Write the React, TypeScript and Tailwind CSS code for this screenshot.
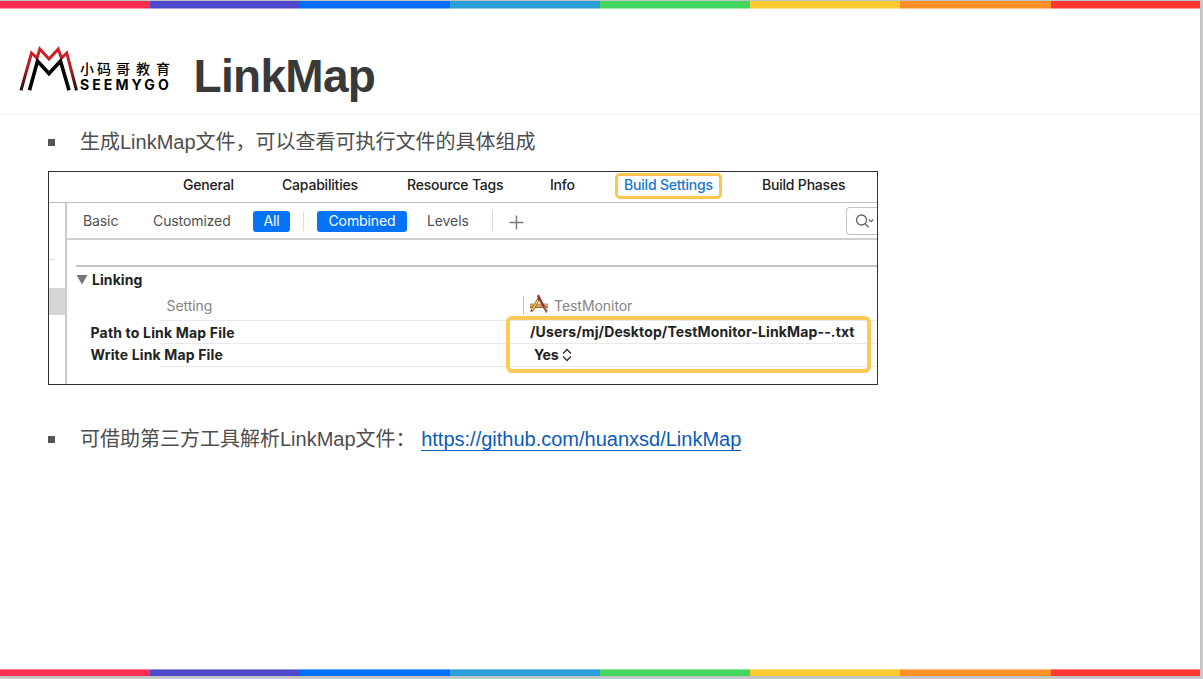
import React from "react";

function Stripe() {
  return (
    <div className="flex h-full w-full">
      <div className="w-[150px] bg-[#ff2d51]" />
      <div className="w-[150px] bg-[#4f4acb]" />
      <div className="w-[150px] bg-[#0070ff]" />
      <div className="w-[150px] bg-[#2b9fd9]" />
      <div className="w-[150px] bg-[#43d65e]" />
      <div className="w-[150px] bg-[#ffcb2e]" />
      <div className="w-[151px] bg-[#ff9027]" />
      <div className="w-[149px] bg-[#ff3731]" />
    </div>
  );
}

function Logo() {
  return (
    <div className="flex h-[50px] w-[154px] shrink-0">
      <svg className="shrink-0" width="62" height="50" viewBox="0 0 62 50" fill="none">
        <defs>
          <linearGradient id="peak" x1="0" y1="3" x2="0" y2="45" gradientUnits="userSpaceOnUse">
            <stop offset="0" stopColor="#d3222a" />
            <stop offset="0.45" stopColor="#b51f25" />
            <stop offset="1" stopColor="#2a0709" />
          </linearGradient>
        </defs>
        <path d="M3 45.300 L13.500 8 L19 13 L21.800 4 L31 14 L40.200 4 L43.500 13 L48.800 8 L58.500 45.300" stroke="url(#peak)" strokeWidth="3" />
        <path d="M11.500 45.300 L19.500 16 L31 28.500 L42.500 16 L51 45.300" stroke="#050505" strokeWidth="3.600" />
      </svg>
      <div className="flex w-[92px] flex-col pt-[15px] text-black">
        <div className="flex h-4 items-center font-['Noto_Sans_CJK_SC',sans-serif] text-[14px] leading-4 font-medium">
          <span className="w-[17px]">小</span>
          <span className="w-[19px]">码</span>
          <span className="w-5">哥</span>
          <span className="w-5">教</span>
          <span>育</span>
        </div>
        <div className="mt-px font-['Inter',sans-serif] text-[14px] leading-4 font-bold tracking-[3.100px]">SEEMYGO</div>
      </div>
    </div>
  );
}

function AppIcon() {
  return (
    <svg className="shrink-0" width="20" height="20" viewBox="0 0 20 20" fill="none">
      <path d="M1 9.500h18v4H1z" fill="#d99a6a" />
      <path d="M1 13.500h18" stroke="#a8663f" strokeWidth="1" />
      <path d="M9 2 L17.500 17.500" stroke="#8c3029" strokeWidth="2.400" />
      <path d="M15 13 L17.800 18.500" stroke="#8a7772" strokeWidth="2" />
      <path d="M9.500 5 L2.800 17" stroke="#6a4a20" strokeWidth="2.600" />
      <path d="M9 6 L3 16.500" stroke="#f0cf3c" strokeWidth="1.600" />
      <path d="M9 1 L11 5" stroke="#b62f2b" strokeWidth="2" />
      <path d="M1.300 18.500 L2 15.500 L4 16.500z" fill="#5b4b43" />
    </svg>
  );
}

function Tabs() {
  return (
    <div className="flex h-[31px] border-b border-[#bdbdbd] pb-[5px] pl-[134px] text-[14px] leading-[25px] font-medium tracking-[-0.2px] whitespace-nowrap text-[#202020]">
      <span className="w-[99px]">General</span>
      <span className="w-[125px]">Capabilities</span>
      <span className="w-[143px]">Resource Tags</span>
      <span className="w-[65px]">Info</span>
      <span className="mt-px flex h-[26px] w-[107px] shrink-0 items-center justify-center rounded-[5px] border-[3px] border-[#ffc64f] pb-[3px] text-[#1577d3]">
        Build Settings
      </span>
      <span className="ml-[40px]">Build Phases</span>
    </div>
  );
}

function Toolbar() {
  return (
    <div className="flex h-[37px] shrink-0 items-start border-b-2 border-[#cfcfcf] pt-2 pl-4 text-[14px] leading-[20px] tracking-[-0.1px] whitespace-nowrap text-[#505050]">
      <span className="w-[70px]">Basic</span>
      <span className="w-[100px]">Customized</span>
      <span className="h-[21px] w-[37px] rounded-[3px] bg-[#0573f8] text-center text-white">All</span>
      <span className="ml-[13px] h-5 w-px bg-[#dddddd]" />
      <span className="ml-[13px] h-[21px] w-[90px] rounded-[3px] bg-[#0573f8] text-center text-white">Combined</span>
      <span className="ml-5 w-[65px]">Levels</span>
      <span className="h-5 w-px bg-[#d8d8d8]" />
      <svg className="mt-1 ml-4" width="15" height="15" viewBox="0 0 15 15" stroke="#777777" strokeWidth="1.400">
        <path d="M7.500 .5v14M.5 7.500h14" />
      </svg>
      <span className="mt-[-4px] ml-auto flex h-[28px] w-[31px] items-center rounded-l-[4px] border-[1.500px] border-r-0 border-[#c2c2c2] pl-2">
        <svg width="22" height="18" viewBox="0 0 22 18" fill="none" stroke="#666666" strokeWidth="1.300">
          <circle cx="6.500" cy="8" r="5" />
          <path d="M10.200 11.700l3.300 3.500M13.800 7.500l2.300 2.200 2.300-2.200" />
        </svg>
      </span>
    </div>
  );
}

function BuildSettings() {
  return (
    <div className="relative ml-12 h-[214px] w-[830px] overflow-hidden border border-[#303030] bg-white font-['Inter',sans-serif]">
      <Tabs />
      <div className="flex h-[181px]">
        <div className="flex w-[18px] shrink-0 flex-col border-r-2 border-[#cacaca]">
          <div className="mt-[56px] h-px w-[6px] bg-[#dddddd]" />
          <div className="mt-[28px] h-[27px] w-full bg-[#d5d5d5]" />
        </div>
        <div className="flex min-w-0 flex-1 flex-col">
          <Toolbar />
          <div className="mt-[25px] ml-[9px] h-[2px] shrink-0 bg-[#c4c4c4]" />
          <div className="flex h-[26px] shrink-0 items-center pl-[9px] text-[14px] font-bold text-[#222222]">
            <svg width="12" height="10" viewBox="0 0 12 10">
              <path d="M.5 0h11L6 9.500z" fill="#777777" />
            </svg>
            <span className="ml-[4px] pb-px tracking-[0.080px]">Linking</span>
          </div>
          <div className="flex h-[27px] shrink-0 items-start pl-[99.500px] text-[14px] leading-[25px] tracking-[-0.050px] text-[#858585]">
            <span className="w-[356.500px]">Setting</span>
            <span className="mt-[3px] h-[18px] w-px bg-[#bdbdbd]" />
            <span className="mt-px ml-[5px] flex"><AppIcon /></span>
            <span className="ml-[5px]">TestMonitor</span>
          </div>
          <div className="ml-[93px] h-px shrink-0 bg-[#e9e9e9]" />
          <div className="flex h-[22px] shrink-0 items-center pl-[23.500px] text-[14px] font-bold tracking-[0.180px] whitespace-nowrap text-[#222222]">
            <span className="w-[439.500px]">Path to Link Map File</span>
            <span className="pb-[2px] tracking-[0.130px]">/Users/mj/Desktop/TestMonitor-LinkMap--.txt</span>
          </div>
          <div className="ml-[93px] h-px shrink-0 bg-[#e9e9e9]" />
          <div className="flex h-[22px] shrink-0 items-center pb-px pl-[23.500px] text-[14px] font-bold tracking-[0.150px] whitespace-nowrap text-[#222222]">
            <span className="w-[443.500px]">Write Link Map File</span>
            <span className="w-[28px] tracking-[-0.1px]">Yes</span>
            <svg className="mt-px" width="10" height="14" viewBox="0 0 10 14" fill="none" stroke="#333333" strokeWidth="1.500">
              <path d="M1 5.500l4-4 4 4M1 8.500l4 4 4-4" />
            </svg>
          </div>
          <div className="ml-[93px] h-px shrink-0 bg-[#e9e9e9]" />
        </div>
      </div>
      <div className="absolute top-[144px] left-[457px] h-[57px] w-[365px] rounded-[6px] border-4 border-[#ffc957]" />
    </div>
  );
}

export default function App() {
  return (
    <div className="h-[679px] w-[1203px] overflow-hidden bg-[#cdcfd0] pt-px">
      <main className="flex h-[675px] w-[1200px] flex-col bg-white font-['Liberation_Sans','Noto_Sans_CJK_SC',sans-serif] text-[#4d4d4d] shadow-[0_0_5px_rgba(0,0,0,0.15)]">
        <div className="h-[7px] shrink-0"><Stripe /></div>
        <div className="h-px shrink-0 opacity-50"><Stripe /></div>
        <header className="flex h-[106px] shrink-0 items-start border-b-2 border-[#f6f6f6] pt-[36px] pl-[18px]">
          <Logo />
          <h1 className="mt-[5px] ml-[21.500px] text-[46px] leading-[52px] font-bold tracking-[-0.700px] text-[#393939]">LinkMap</h1>
        </header>
        <div className="flex h-[56px] shrink-0 items-center pl-12 text-[20px] leading-[30px]">
          <span className="mr-[25px] mb-[2px] size-[7px] bg-[#555555]" />
          <span className="pb-[2px]">生成LinkMap文件，可以查看可执行文件的具体组成</span>
        </div>
        <BuildSettings />
        <div className="mt-[39px] flex h-[30px] shrink-0 items-center pl-12 text-[20px] leading-[30px] whitespace-pre">
          <span className="mr-[25px] size-[7px] bg-[#555555]" />
          <span>可借助第三方工具解析LinkMap文件： </span>
          <span className="border-b border-[#0b5cba] leading-[22px] text-[#0b5cba]">https://github.com/huanxsd/LinkMap</span>
        </div>
        <div className="mt-auto h-px shrink-0 opacity-60"><Stripe /></div>
        <div className="h-[6px] shrink-0"><Stripe /></div>
      </main>
    </div>
  );
}
